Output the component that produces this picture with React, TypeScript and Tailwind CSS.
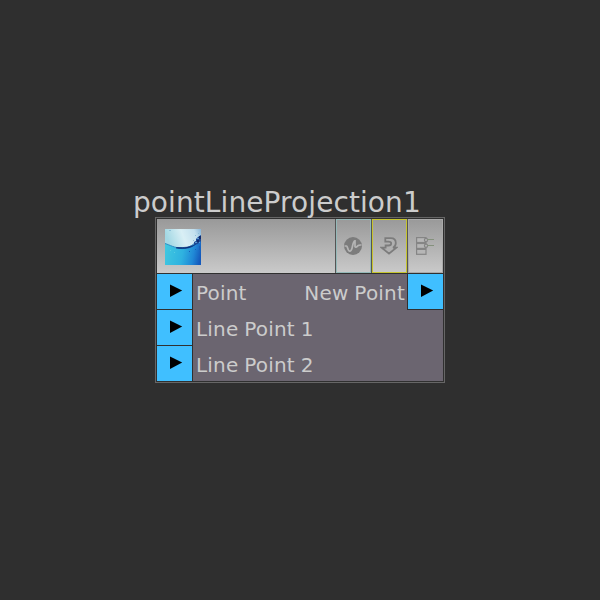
import React from "react";

function Port() {
  return (
    <div className="h-[35px] bg-[#40bfff]">
      <svg width="35" height="35" viewBox="0 0 35 35" className="block">
        <path d="M13 10.6 L25.2 16.6 L13 23Z" fill="#000" />
      </svg>
    </div>
  );
}

function WaterIcon() {
  return (
    <svg width="36" height="36" viewBox="0 0 36 36" className="block">
      <defs>
        <linearGradient id="sky" x1="0" y1="0.2" x2="1" y2="0">
          <stop offset="0" stopColor="#a3d8e4" />
          <stop offset="0.45" stopColor="#d9eff5" />
          <stop offset="0.8" stopColor="#c3e0ee" />
          <stop offset="1" stopColor="#88b5d8" />
        </linearGradient>
        <linearGradient id="sea" x1="0" y1="0.5" x2="1" y2="0.7">
          <stop offset="0" stopColor="#40c8e0" />
          <stop offset="0.5" stopColor="#2fb2e0" />
          <stop offset="0.8" stopColor="#2088d6" />
          <stop offset="1" stopColor="#155abc" />
        </linearGradient>
      </defs>
      <rect width="36" height="36" fill="url(#sea)" />
      <path d="M0 0H36V6C31 16 25 19 17 19C9 19 5 16 0 14.5Z" fill="url(#sky)" />
      <path d="M0 14.5C5 16 9 19 17 19C24 19 29 16 33 10" fill="none" stroke="#2f8cc4" strokeWidth="1" />
      <path d="M11 18.9C16 20 23 20 28 17L31 15C26 18 20 19 12 18.5Z" fill="#0a2c78" stroke="#0a2c78" strokeWidth="0.6" />
      <path d="M36 6L33 8L31 10L31 12L29 13L29 16L33 15L35 12L36 13Z" fill="#1c4a96" />
      <path d="M32 9h2v1h-2zM30 13h2v1h-2zM34 13h1v1h-1z" fill="#5c9bd0" />
      <path d="M34 7h2v3h-2zM32 11h2v2h-2z" fill="#102c70" />
      <path d="M30 6h1v1h-1zM33 4h1v1h-1zM28 11h1v1h-1zM4 1h2v1h-2z" fill="#8dbfd8" />
      <path d="M34 17h1v4h-1zM24 22h1v1h-1zM30 20h1v1h-1z" fill="#195fb8" />
      <path d="M5 21h1v1h-1zM9 23h1v1h-1z" fill="#55cce4" />
    </svg>
  );
}

function WaveIcon() {
  return (
    <svg width="18" height="18" viewBox="0 0 18 18">
      <circle cx="9" cy="9" r="9" fill="#7c7c7c" />
      <path d="M0.5 9H2.6C3.6 9 3.6 14.2 5.8 14.2C9.2 14.2 8 3.8 11 3.8V9.6C11.6 10.8 13 9.8 14 8.6C14.8 7.8 16 8 17.5 8" fill="none" stroke="#b5b5b5" strokeWidth="1.7" />
    </svg>
  );
}

function ArrowIcon() {
  return (
    <svg width="18" height="18" viewBox="0 0 18 18">
      <path d="M5.3 1.2H10.8C14.2 1.2 15.8 3.4 15.8 6C15.8 8 14.8 9.8 13 10.7H16.3L9 16.6L1.7 10.7H5.6V8.5H8.5C10.2 8.5 11.2 7.6 11.2 6.2C11.2 5 10 4.7 8.5 4.7H5.3Z" fill="#b0b0b0" stroke="#7c7c7c" strokeWidth="1.8" />
    </svg>
  );
}

function StackIcon() {
  return (
    <svg width="18" height="18" viewBox="0 0 18 18">
      <g fill="#b6b6b6" stroke="#858585" strokeWidth="1.2">
        <rect x="0.6" y="0.6" width="9.4" height="4.9" />
        <rect x="0.6" y="6.5" width="9.4" height="4.9" />
        <rect x="0.6" y="12.4" width="9.4" height="4.9" />
        <circle cx="10" cy="3" r="1.6" />
        <circle cx="10" cy="8.7" r="1.6" />
      </g>
      <path d="M11.5 2.5H18M11.5 8.5H18" stroke="#84917c" strokeWidth="1.2" />
    </svg>
  );
}

function HeaderButton({ border, children }: { border: string; children: React.ReactNode }) {
  return (
    <div className="flex border-l border-[#555555]">
      <div className={`flex h-[54px] w-[35px] items-center justify-center border pr-px ${border}`}>{children}</div>
    </div>
  );
}

export default function App() {
  return (
    <main className="h-[600px] w-[600px] overflow-hidden bg-[#2f2f2f] pt-[186px] font-['DejaVu_Sans','Liberation_Sans',sans-serif] text-[#cccccc]">
      <h1 className="ml-[133px] h-[31px] whitespace-nowrap text-[28px] leading-[33px] font-normal tracking-[0.09px]">pointLineProjection1</h1>
      <section className="ml-[155px] w-[290px] border border-[#666666]">
        <div className="border border-[#303030] bg-[#6b6570]">
          <header className="flex h-[55px] border-b border-[#303030] bg-linear-to-b from-[#999999] to-[#cacaca]">
            <div className="flex flex-1 pt-[10px] pl-2">
              <WaterIcon />
            </div>
            <HeaderButton border="border-[#94b8b8]"><WaveIcon /></HeaderButton>
            <HeaderButton border="border-[#c6c52f]"><ArrowIcon /></HeaderButton>
            <HeaderButton border="border-[#aaaaaa]"><StackIcon /></HeaderButton>
          </header>
          <div className="flex h-[107px] text-[20px] leading-[36px] tracking-[0.2px] [word-spacing:-0.8px]">
            <div className="flex w-[36px] shrink-0 flex-col gap-px border-r border-[#303030] bg-[#303030]">
              <Port />
              <Port />
              <Port />
            </div>
            <div className="min-w-0 flex-1 pt-px pl-[3px] whitespace-nowrap">
              <div className="h-[36px]">Point</div>
              <div className="h-[36px]">Line Point 1</div>
              <div className="h-[34px]">Line Point 2</div>
            </div>
            <div className="h-[36px] shrink-0 pt-px pr-[2px] whitespace-nowrap">New Point</div>
            <div className="h-[36px] w-[36px] shrink-0 border-b border-l border-[#303030]">
              <Port />
            </div>
          </div>
        </div>
      </section>
    </main>
  );
}
